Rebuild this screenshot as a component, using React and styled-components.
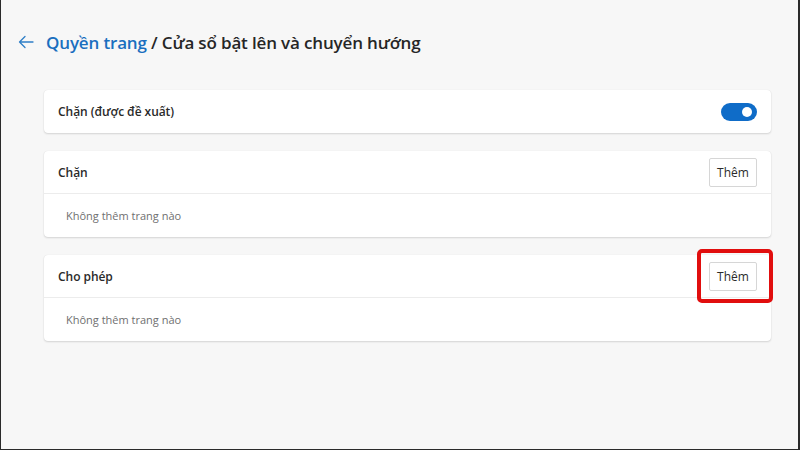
import { createGlobalStyle } from 'styled-components';
import styled from 'styled-components';

const GlobalStyle = createGlobalStyle`
  html, body {
    margin: 0;
    padding: 0;
    background: #f7f7f7;
  }
  body {
    font-family: 'Open Sans', 'Noto Sans', sans-serif;
    color: #1b1b1b;
  }
`;

const Frame = styled.div`
  width: 800px;
  height: 450px;
  box-sizing: border-box;
  background: #f7f7f7;
  border-left: 1px solid #2a2a2a;
  border-right: 2px solid #2a2a2a;
  border-bottom: 1px solid #2a2a2a;
  padding: 28px 27px 0 15px;
`;

const Header = styled.div`
  display: flex;
  align-items: center;
  height: 28px;
  margin-bottom: 34px;
`;

const BackButton = styled.button`
  width: 20px;
  height: 20px;
  padding: 0;
  margin-right: 10px;
  border: none;
  background: none;
  display: flex;
  align-items: center;
  justify-content: center;
  color: #2f7fc7;
  cursor: pointer;
`;

const Title = styled.h1`
  margin: 0;
  font-size: 17px;
  font-weight: 600;
  color: #262626;
  letter-spacing: -0.15px;
`;

const Crumb = styled.a`
  color: #1a6fbf;
  text-decoration: none;
`;

const Stack = styled.div`
  display: flex;
  flex-direction: column;
  gap: 18px;
  padding-left: 28px;
`;

const Card = styled.section`
  background: #fff;
  border-radius: 4px;
  box-shadow: 0 1px 2px rgba(0, 0, 0, 0.14), 0 0 1px rgba(0, 0, 0, 0.1);
`;

const Row = styled.div`
  display: flex;
  align-items: center;
  justify-content: space-between;
  height: 43px;
  box-sizing: border-box;
  padding: 0 14px;
  border-bottom: ${p => (p.$divider ? '1px solid #ececec' : 'none')};
`;

const Label = styled.span`
  font-size: 12px;
  font-weight: 600;
  letter-spacing: -0.05px;
  color: #2a2a2a;
`;

const Empty = styled.div`
  height: 43px;
  display: flex;
  align-items: center;
  padding-left: 22px;
  font-size: 11px;
  color: #6f6f6f;
`;

const Toggle = styled.span`
  position: relative;
  width: 36px;
  height: 18px;
  border-radius: 9px;
  background: #0f6cc8;
  &::after {
    content: '';
    position: absolute;
    right: 5px;
    top: 4px;
    width: 10px;
    height: 10px;
    border-radius: 50%;
    background: #fff;
  }
`;

const AddWrap = styled.div`
  position: relative;
  display: flex;
`;

const AddButton = styled.button`
  width: 48px;
  height: 29px;
  padding: 0;
  border: 1px solid #d6d6d6;
  border-radius: 2px;
  background: #fff;
  font-family: inherit;
  font-size: 12px;
  color: #2b2b2b;
`;

const Highlight = styled.span`
  position: absolute;
  left: -12px;
  right: -16px;
  top: -13px;
  bottom: -12px;
  border: 4px solid #e10e0e;
  border-radius: 5px;
  pointer-events: none;
`;

const ArrowLeft = () => (
  <svg width="16" height="14" viewBox="0 0 16 14" fill="none">
    <path
      d="M15 7H1.5M7 1.5L1.5 7L7 12.5"
      stroke="currentColor"
      strokeWidth="1.3"
      strokeLinecap="round"
      strokeLinejoin="round"
    />
  </svg>
);

const Section = ({ title, highlight }) => (
  <Card>
    <Row $divider>
      <Label>{title}</Label>
      <AddWrap>
        <AddButton type="button">Thêm</AddButton>
        {highlight && <Highlight />}
      </AddWrap>
    </Row>
    <Empty>Không thêm trang nào</Empty>
  </Card>
);

export default function App() {
  return (
    <>
      <GlobalStyle />
      <Frame>
        <Header>
          <BackButton aria-label="Quay lại">
            <ArrowLeft />
          </BackButton>
          <Title>
            <Crumb href="#">Quyền trang</Crumb> / Cửa sổ bật lên và chuyển hướng
          </Title>
        </Header>
        <Stack>
          <Card>
            <Row>
              <Label>Chặn (được đề xuất)</Label>
              <Toggle />
            </Row>
          </Card>
          <Section title="Chặn" />
          <Section title="Cho phép" highlight />
        </Stack>
      </Frame>
    </>
  );
}
